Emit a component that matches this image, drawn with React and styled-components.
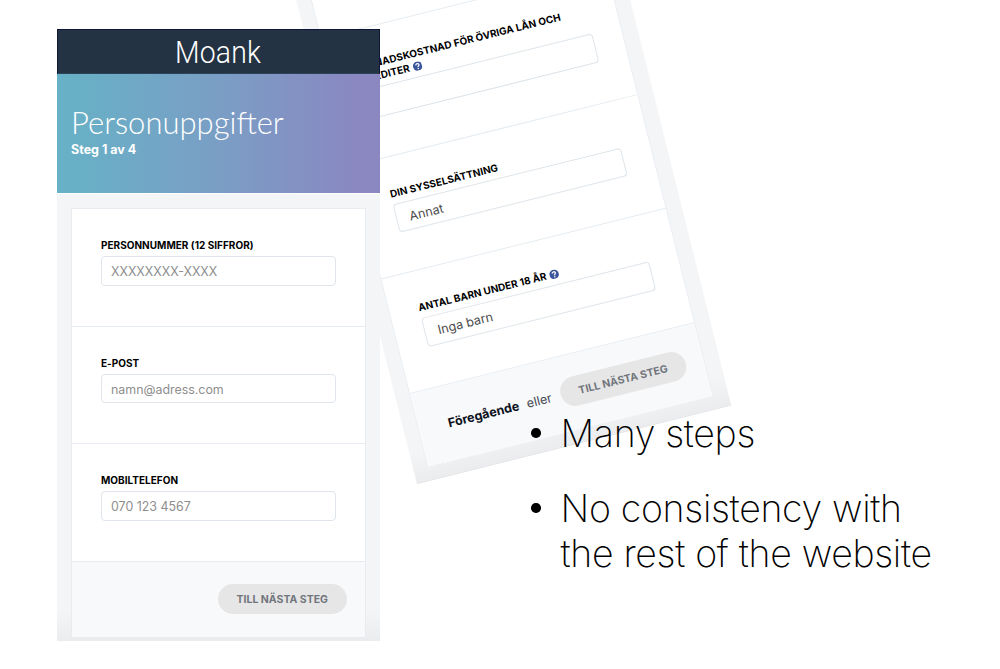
import React from "react";
import styled, { createGlobalStyle, css } from "styled-components";

const GlobalStyle = createGlobalStyle`
  * { box-sizing: border-box; }
  body { margin: 0; background: #fff; overflow: hidden; }
`;

const Slide = styled.main`
  position: relative;
  width: 1000px;
  height: 669px;
  overflow: hidden;
  background: #fff;
  font-family: Inter, "Liberation Sans", sans-serif;
`;

const Screen = styled.section`
  position: absolute;
  display: flex;
  flex-direction: column;
  width: 323px;
  background: linear-gradient(to top, #ebecee 0, #f4f5f7 30px);
`;

const FrontScreen = styled(Screen)`
  left: 57px;
  top: 28.5px;
  height: 612px;
`;

const TiltedScreen = styled(Screen)`
  left: 417px;
  top: -216px;
  width: 323.5px;
  height: 700px;
  justify-content: flex-end;
  padding-bottom: 12.5px;
  border-bottom: 1px solid #e0e1e4;
  transform: rotate(-14deg);
  transform-origin: 0 100%;
`;

const Brand = styled.header`
  flex: none;
  height: 45px;
  border: 1px solid #10163a;
  border-bottom-color: #2c4256;
  background: #233343;
  color: #fff;
  font: 300 31px/46px Roboto, sans-serif;
  letter-spacing: 0.2px;
  text-align: center;
`;

const Wordmark = styled.span`
  display: inline-block;
  transform: scaleX(0.915);
`;

const Hero = styled.div`
  flex: none;
  height: 120px;
  padding: 30px 14px 0;
  border-bottom: 1px solid #fff;
  background: linear-gradient(90deg, #66b2c6 0%, #7a9ec5 50%, #8a87c1 94%, #8a87c1 100%);
  color: #fff;
`;

const Title = styled.h1`
  margin: 0;
  font: 300 31px/37px Lato, sans-serif;
`;

const Step = styled.div`
  padding-top: 1.5px;
  font-size: 12.5px;
  font-weight: 700;
  line-height: 16px;
`;

const Card = styled.div`
  flex: none;
  width: 295px;
  margin: 14.5px 14px 0;
  border: 1px solid #e8ecf1;
  background: #fff;
`;

const Field = styled.div`
  display: flex;
  flex-direction: column;
  padding: 30px 29px 40px;
  border-bottom: 1px solid #e6ecf1;
`;

const EmptyField = styled.div`
  height: 110px;
  border-bottom: 1px solid #e6ecf1;
`;

const Label = styled.label`
  margin-bottom: 3.5px;
  color: #000;
  font-size: 10px;
  font-weight: 700;
  line-height: 13.5px;
  letter-spacing: 0.02px;
  white-space: nowrap;
`;

const Input = styled.div`
  height: 29.5px;
  padding: 0 9px;
  border: 1px solid #dfe5ea;
  border-radius: 4px;
  color: #8e8e8e;
  font-size: 12.4px;
  line-height: 29px;
  white-space: nowrap;
  ${(p) =>
    p.$filled &&
    css`
      padding: 0 12.5px;
      color: #4b4b4b;
      font-size: 12.6px;
      line-height: 29.5px;
    `}
`;

const Footer = styled.footer`
  display: flex;
  align-items: center;
  justify-content: flex-end;
  height: 75px;
  padding-right: 18px;
  background: #f8f9fb;
  color: #444a52;
  font-size: 12.6px;
`;

const Previous = styled.strong`
  margin-right: 8px;
  color: #0c1220;
`;

const NextButton = styled.button`
  width: 129.5px;
  height: 30.5px;
  margin-left: ${(p) => (p.$afterText ? 9 : 0)}px;
  padding: 1px 0 0;
  border: 0;
  border-radius: 16px;
  background: #e6e6e6;
  color: #71757c;
  font: 700 10.5px/30px Inter, sans-serif;
`;

const HelpSvg = styled.svg`
  width: 9.5px;
  height: 9.5px;
  margin-left: 3.5px;
  vertical-align: -1px;
`;

const Notes = styled.ul`
  position: absolute;
  left: 530px;
  top: 411px;
  display: flex;
  flex-direction: column;
  gap: 30px;
  margin: 0;
  padding: 0;
  list-style: none;
  color: #000;
  font: 200 37.5px/45px Inter, sans-serif;
  letter-spacing: -0.32px;
`;

const Note = styled.li`
  display: flex;
  gap: 20px;
  white-space: nowrap;

  &::before {
    content: "";
    flex: none;
    width: 9.5px;
    height: 9.5px;
    margin: 17.2px 0 0 1px;
    border-radius: 50%;
    background: #000;
  }
`;

const Help = () => (
  <HelpSvg viewBox="0 0 20 20" aria-hidden="true">
    <circle cx="10" cy="10" r="10" fill="#3b559d" />
    <path d="M6.6 7.6c.2-4 6.8-3.9 6.8-.2 0 2.4-3.2 2.3-3.2 4.800" fill="none" stroke="#fff" strokeWidth="2.6" />
    <rect x="8.8" y="13.7" width="2.8" height="2.6" fill="#fff" />
  </HelpSvg>
);

const contactFields = [
  ["PERSONNUMMER (12 SIFFROR)", "XXXXXXXX-XXXX"],
  ["E-POST", "namn@adress.com"],
  ["MOBILTELEFON", "070 123 4567"],
];

export default function App() {
  return (
    <>
      <GlobalStyle />
      <Slide>
        <TiltedScreen>
          <Card>
            <EmptyField />
            <Field>
              <Label>
                MÅNADSKOSTNAD FÖR ÖVRIGA LÅN OCH
                <br />
                KREDITER
                <Help />
              </Label>
              <Input $filled />
            </Field>
            <Field>
              <Label>DIN SYSSELSÄTTNING</Label>
              <Input $filled>Annat</Input>
            </Field>
            <Field>
              <Label>
                ANTAL BARN UNDER 18 ÅR
                <Help />
              </Label>
              <Input $filled>Inga barn</Input>
            </Field>
            <Footer>
              <Previous>Föregående</Previous>
              <span>eller</span>
              <NextButton $afterText>TILL NÄSTA STEG</NextButton>
            </Footer>
          </Card>
        </TiltedScreen>
        <FrontScreen>
          <Brand>
            <Wordmark>Moank</Wordmark>
          </Brand>
          <Hero>
            <Title>Personuppgifter</Title>
            <Step>Steg 1 av 4</Step>
          </Hero>
          <Card>
            {contactFields.map(([label, placeholder]) => (
              <Field key={label}>
                <Label>{label}</Label>
                <Input>{placeholder}</Input>
              </Field>
            ))}
            <Footer>
              <NextButton>TILL NÄSTA STEG</NextButton>
            </Footer>
          </Card>
        </FrontScreen>
        <Notes>
          <Note>Many steps</Note>
          <Note>
            No consistency with
            <br />
            the rest of the website
          </Note>
        </Notes>
      </Slide>
    </>
  );
}
